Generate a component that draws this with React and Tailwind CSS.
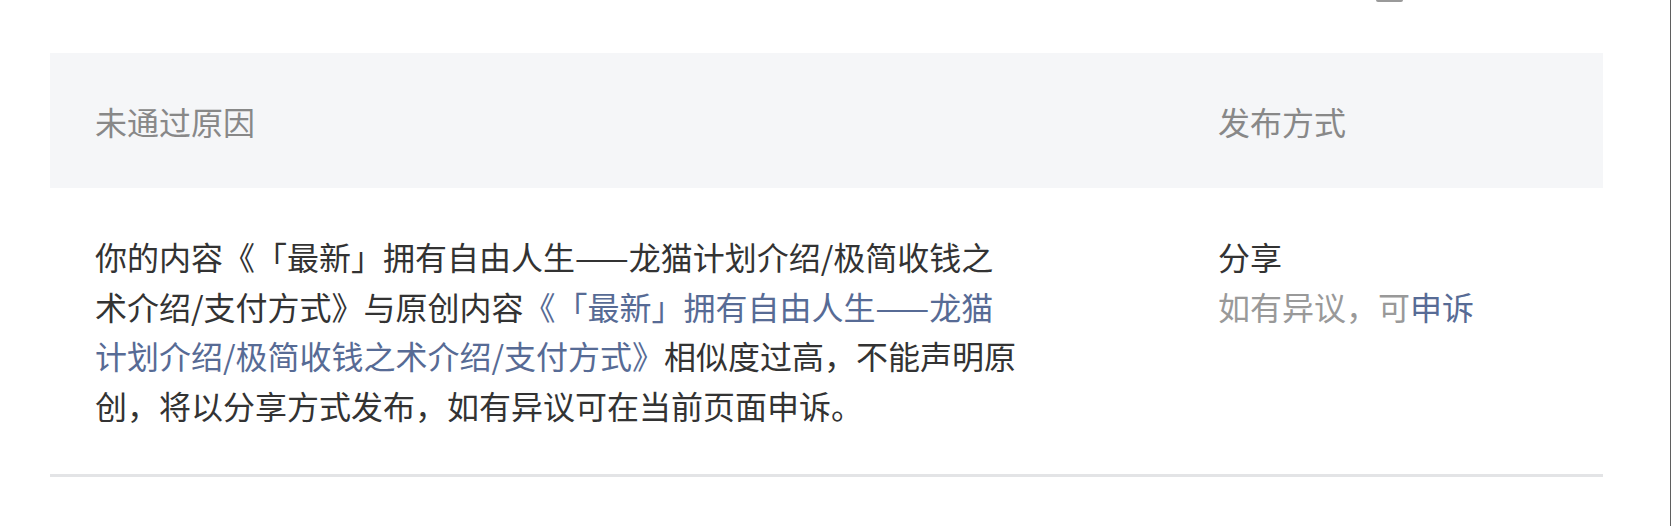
export default function App() {
  const font = { fontFamily: '"Noto Sans CJK SC", "Noto Sans", sans-serif' };
  return (
    <div className="w-[1671px] h-[526px] bg-white border-r border-[#5f5f5f] overflow-hidden [text-spacing-trim:space-all]" style={font}>
      <div className="ml-[1376px] h-[2px] w-[27px] rounded-b-sm bg-[#9a9a9a]" />
      <div className="mt-[51px] ml-[50px] w-[1553px]">
        <div className="grid grid-cols-[1168px_1fr] h-[135px] bg-[#f5f6f8] items-center text-[32px] leading-[40px] text-[#888888]">
          <div className="pl-[45px]">未通过原因</div>
          <div>发布方式</div>
        </div>
        <div className="grid grid-cols-[1168px_1fr] pt-[44px] pb-[44px] border-b-[3px] border-[#e3e4e6] text-[32px] leading-[49.6px]">
          <div className="pl-[45px]">
            <p className="w-[925px] text-[#333333] [text-spacing-trim:space-all]">
              你的内容《「最新」拥有自由人生——龙猫计划介绍/极简收钱之术介绍/支付方式》与原创内容<span className="text-[#576b95]">《「最新」拥有自由人生——龙猫计划介绍/极简收钱之术介绍/支付方式》</span>相似度过高，不能声明原创，将以分享方式发布，如有异议可在当前页面申诉。
            </p>
          </div>
          <div className="flex flex-col">
            <span className="text-[#333333]">分享</span>
            <span className="text-[#999999]">
              如有异议，可<span className="text-[#576b95]">申诉</span>
            </span>
          </div>
        </div>
      </div>
    </div>
  );
}
